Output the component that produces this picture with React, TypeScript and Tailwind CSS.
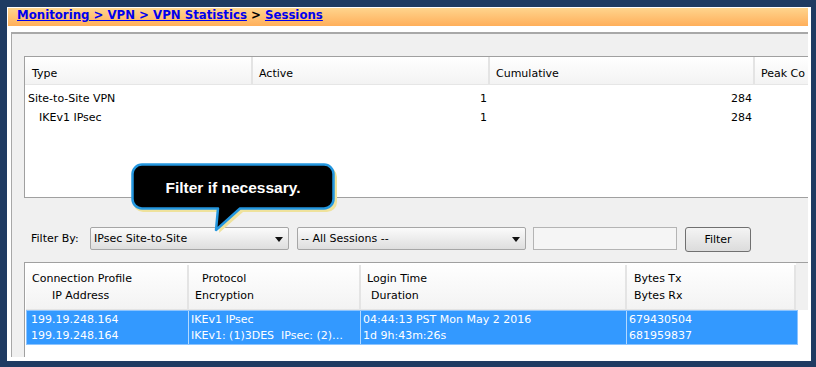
import React from "react";

function Select({ label, className }: { label: string; className: string }) {
  return (
    <div
      className={`h-[23px] flex items-center justify-between border border-[#a6a6a6] rounded-[2px] bg-gradient-to-b from-[#fbfbfb] to-[#dedede] pl-[3px] pr-[5px] pt-px ${className}`}
    >
      <span className="whitespace-nowrap">{label}</span>
      <svg width="8" height="5" viewBox="0 0 8 5">
        <path d="M0 0H8L4 5Z" fill="#111" />
      </svg>
    </div>
  );
}

export default function App() {
  return (
    <div className="relative w-[816px] h-[367px] bg-[#1f3b62] pt-[7px] pl-[7px] pr-[5px] pb-[6px] overflow-hidden font-['DejaVu_Sans',Verdana,sans-serif] text-[11px] text-black">
      <div className="h-full bg-white flex flex-col">
        {/* breadcrumb bar */}
        <div className="mt-px ml-px mr-[3px] h-[18px] shrink-0 bg-gradient-to-b from-[#ffd48c] to-[#ffaf5a] pl-[9px] pt-px font-bold text-[11.75px] leading-[12px] whitespace-nowrap">
          <span className="underline text-[#0000ee]">Monitoring &gt; VPN &gt; VPN Statistics</span>
          <span> &gt; </span>
          <span className="underline text-[#0000ee]">Sessions</span>
        </div>

        {/* panel */}
        <div className="mt-[6px] ml-[4px] mr-[3px] h-[325px] shrink-0 border-l border-t-2 border-[#a8a8a8] bg-[#f0f0f0] overflow-hidden flex flex-col pl-[12px] pt-[22px]">
          {/* summary table */}
          <div className="h-[142px] shrink-0 border-y border-l border-[#a0a0a0] bg-white flex flex-col leading-[19px]">
            <div className="h-[28px] shrink-0 flex bg-gradient-to-b from-white to-[#f3f3f3] border-b border-[#e6e6e6]">
              <div className="w-[228px] shrink-0 pl-[7px] pt-[6px] flex items-center border-r-2 border-[#e4e4e4]">Type</div>
              <div className="w-[237px] shrink-0 pl-[6px] pt-[6px] flex items-center border-r-2 border-[#e4e4e4]">Active</div>
              <div className="w-[265px] shrink-0 pl-[6px] pt-[6px] flex items-center border-r-2 border-[#e4e4e4]">Cumulative</div>
              <div className="flex-1 pl-[6px] pt-[6px] flex items-center whitespace-nowrap overflow-hidden">Peak Co</div>
            </div>
            <div className="pt-[4px]">
              <div className="h-[19px] flex">
                <div className="w-[228px] shrink-0 pl-[3px] whitespace-nowrap">Site-to-Site VPN</div>
                <div className="w-[237px] shrink-0 pr-[3px] text-right">1</div>
                <div className="w-[265px] shrink-0 pr-[3px] text-right">284</div>
              </div>
              <div className="h-[19px] flex">
                <div className="w-[228px] shrink-0 pl-[14px] whitespace-nowrap">IKEv1 IPsec</div>
                <div className="w-[237px] shrink-0 pr-[3px] text-right">1</div>
                <div className="w-[265px] shrink-0 pr-[3px] text-right">284</div>
              </div>
            </div>
          </div>

          {/* filter row */}
          <div className="mt-[29px] h-[25px] shrink-0 flex items-start">
            <div className="w-[66px] shrink-0 h-[23px] flex items-center pl-[7px] pt-px">Filter By:</div>
            <Select label="IPsec Site-to-Site" className="w-[199px] shrink-0" />
            <Select label="-- All Sessions --" className="ml-[8px] w-[229px] shrink-0" />
            <div className="ml-[7px] w-[144px] h-[23px] shrink-0 border border-[#b4b4b4] bg-[#f5f5f5]" />
            <div className="ml-[8px] w-[66px] h-[25px] shrink-0 border border-[#707070] rounded-[3px] bg-gradient-to-b from-[#f4f4f4] to-[#dcdcdc] flex items-center justify-center pt-px">
              Filter
            </div>
          </div>

          {/* sessions table */}
          <div className="mt-[10px] flex-1 border-t border-l border-[#a0a0a0] bg-white pl-px">
            <div className="h-[47px] flex bg-[#f0f0f0]">
              <div className="flex w-[770px] shrink-0 bg-gradient-to-b from-white to-[#f3f3f3] border-b border-[#e4e4e4] leading-[17px] pt-[2px]">
                <div className="w-[163px] shrink-0 flex flex-col justify-center pl-[6px] border-r-2 border-[#e4e4e4] whitespace-nowrap">
                  <span>Connection Profile</span>
                  <span className="pl-[20px]">IP Address</span>
                </div>
                <div className="w-[172px] shrink-0 flex flex-col justify-center pl-[6px] border-r-2 border-[#e4e4e4] whitespace-nowrap">
                  <span className="pl-[7px]">Protocol</span>
                  <span>Encryption</span>
                </div>
                <div className="w-[266px] shrink-0 flex flex-col justify-center pl-[6px] border-r-2 border-[#e4e4e4] whitespace-nowrap">
                  <span>Login Time</span>
                  <span className="pl-[4px]">Duration</span>
                </div>
                <div className="w-[169px] shrink-0 flex flex-col justify-center pl-[7px] border-r-2 border-[#e4e4e4] whitespace-nowrap">
                  <span>Bytes Tx</span>
                  <span>Bytes Rx</span>
                </div>
              </div>
            </div>
            <div className="h-[35px] w-[772px] flex bg-[#3399ff] text-white border border-[#8cc4ff] leading-[16px]">
              <div className="w-[162px] shrink-0 flex flex-col justify-center pl-[4px] border-r border-[#b3d9ff] whitespace-nowrap">
                <span>199.19.248.164</span>
                <span>199.19.248.164</span>
              </div>
              <div className="w-[172px] shrink-0 flex flex-col justify-center pl-[2px] border-r border-[#b3d9ff] whitespace-nowrap overflow-hidden">
                <span>IKEv1 IPsec</span>
                <span className="whitespace-pre">IKEv1: (1)3DES  IPsec: (2)…</span>
              </div>
              <div className="w-[266px] shrink-0 flex flex-col justify-center pl-[2px] border-r border-[#b3d9ff] whitespace-nowrap">
                <span>04:44:13 PST Mon May 2 2016</span>
                <span>1d 9h:43m:26s</span>
              </div>
              <div className="flex-1 flex flex-col justify-center pl-[2px] whitespace-nowrap">
                <span>679430504</span>
                <span>681959837</span>
              </div>
            </div>
          </div>
        </div>
      </div>

      {/* callout */}
      <div className="absolute left-[131px] top-[163px] w-[212px] h-[72px]">
        <svg width="212" height="72" viewBox="0 0 212 72" className="absolute left-0 top-0">
          <path
            d="M12 4 H196 A10 10 0 0 1 206 14 V39 A10 10 0 0 1 196 49 H112 L88 70 L90 49 H12 A10 10 0 0 1 2 39 V14 A10 10 0 0 1 12 4 Z"
            fill="#efe29c"
          />
          <path
            d="M11 1.5 H193 A9.5 9.5 0 0 1 202.5 11 V36 A9.5 9.5 0 0 1 193 45.5 H109 L85 67 L87 45.5 H11 A9.5 9.5 0 0 1 1.5 36 V11 A9.5 9.5 0 0 1 11 1.5 Z"
            fill="#000"
            stroke="#2497df"
            strokeWidth="2.5"
            strokeLinejoin="round"
          />
        </svg>
        <div className="absolute left-0 top-0 w-[204px] h-[47px] flex items-center justify-center pt-[3px] text-white font-bold text-[15.5px] font-['Liberation_Sans',Arial,sans-serif]">
          Filter if necessary.
        </div>
      </div>
    </div>
  );
}
